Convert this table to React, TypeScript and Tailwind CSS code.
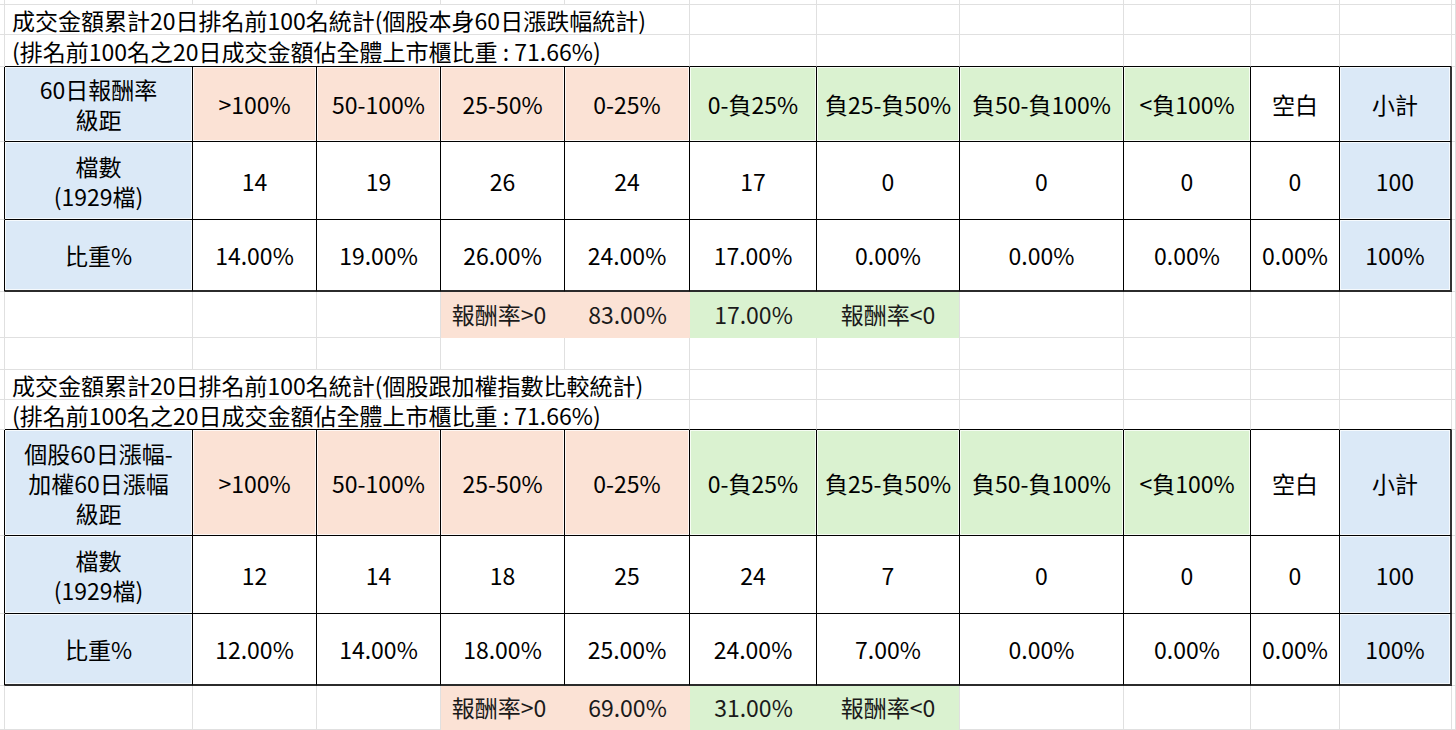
import React from "react";

type Fill = "blue" | "pink" | "green" | "white";

const GRID = "border-r border-b border-[#e0e0e0]";

const FILL: Record<Fill, string> = {
  blue: "bg-[#dbe9f7] shadow-[inset_0_0_0_1px_rgba(255,255,255,0.75)]",
  pink: "bg-[#fbe2d5] shadow-[inset_0_0_0_1px_rgba(255,255,255,0.75)]",
  green: "bg-[#daf2d0] shadow-[inset_0_0_0_1px_rgba(255,255,255,0.75)]",
  white: "bg-white",
};

const HEAD_FILLS: Fill[] = ["blue", "pink", "pink", "pink", "pink", "green", "green", "green", "green", "white", "blue"];
const BODY_FILLS: Fill[] = ["blue", "white", "white", "white", "white", "white", "white", "white", "white", "white", "blue"];

const RANGES = [">100%", "50-100%", "25-50%", "0-25%", "0-負25%", "負25-負50%", "負50-負100%", "<負100%", "空白", "小計"];

const TABLES = [
  {
    title: "成交金額累計20日排名前100名統計(個股本身60日漲跌幅統計)",
    sub: "(排名前100名之20日成交金額佔全體上市櫃比重 : 71.66%)",
    head: "60日報酬率\n級距",
    counts: ["14", "19", "26", "24", "17", "0", "0", "0", "0", "100"],
    pcts: ["14.00%", "19.00%", "26.00%", "24.00%", "17.00%", "0.00%", "0.00%", "0.00%", "0.00%", "100%"],
    up: "83.00%",
    down: "17.00%",
  },
  {
    title: "成交金額累計20日排名前100名統計(個股跟加權指數比較統計)",
    sub: "(排名前100名之20日成交金額佔全體上市櫃比重 : 71.66%)",
    head: "個股60日漲幅-\n加權60日漲幅\n級距",
    counts: ["12", "14", "18", "25", "24", "7", "0", "0", "0", "100"],
    pcts: ["12.00%", "14.00%", "18.00%", "25.00%", "24.00%", "7.00%", "0.00%", "0.00%", "0.00%", "100%"],
    up: "69.00%",
    down: "31.00%",
  },
];

function Cell({ children, className = "" }: { children?: React.ReactNode; className?: string }) {
  return (
    <div className={`flex items-center justify-center text-center whitespace-pre-line leading-[30px] ${className}`}>
      {children}
    </div>
  );
}

function BlankRow() {
  return (
    <>
      {Array.from({ length: 13 }).map((_, i) => (
        <Cell key={i} className={GRID} />
      ))}
    </>
  );
}

function TitleRow({ text, tableTop = false }: { text: string; tableTop?: boolean }) {
  const bottom = tableTop ? "border-r border-b border-[#e0e0e0] border-b-black" : GRID;
  return (
    <>
      <Cell className={GRID} />
      <Cell className={`col-span-5 !justify-start pl-[7px] whitespace-nowrap !leading-[24px] ${bottom}`}>
        {text}
      </Cell>
      {Array.from({ length: 6 }).map((_, i) => (
        <Cell key={i} className={bottom} />
      ))}
      <Cell className={GRID} />
    </>
  );
}

function TableRow({ cells, fills, last = false }: { cells: string[]; fills: Fill[]; last?: boolean }) {
  return (
    <>
      <Cell className="border-b border-r border-[#e0e0e0] border-r-black" />
      {cells.map((c, i) => (
        <Cell
          key={i}
          className={`border-r border-b border-black ${FILL[fills[i]]} ${last ? "border-b-2 border-b-[#2b2b2b]" : ""} ${
            i === 10 ? "border-r-2 border-r-[#333]" : ""
          }`}
        >
          {c}
        </Cell>
      ))}
      <Cell className={GRID} />
    </>
  );
}

function SummaryRow({ up, down }: { up: string; down: string }) {
  return (
    <>
      {Array.from({ length: 4 }).map((_, i) => (
        <Cell key={i} className={GRID} />
      ))}
      <Cell className="bg-[#fbe2d5] text-[#1a1a1a] pr-[8px] pb-[3px]">報酬率&gt;0</Cell>
      <Cell className="bg-[#fbe2d5] text-[#1a1a1a] pb-[3px]">{up}</Cell>
      <Cell className="bg-[#daf2d0] text-[#1a1a1a] pb-[3px]">{down}</Cell>
      <Cell className="bg-[#daf2d0] text-[#1a1a1a] pb-[3px] border-r border-[#e0e0e0]">報酬率&lt;0</Cell>
      {Array.from({ length: 5 }).map((_, i) => (
        <Cell key={i} className={GRID} />
      ))}
    </>
  );
}

export default function App() {
  const [a, b] = TABLES;
  return (
    <div className="w-[1456px] h-[730px] overflow-hidden bg-white text-black text-[23px] [font-family:'Noto_Sans_CJK_TC','Noto_Sans',sans-serif]">
      <div className="grid grid-cols-[5px_188px_124px_124px_124px_125px_127px_143px_164px_127px_89px_112px_1fr] grid-rows-[5px_30px_32px_75px_78px_72px_46px_32px_30px_30px_106px_78px_72px_44px]">
        <BlankRow />
        <TitleRow text={a.title} />
        <TitleRow text={a.sub} tableTop />
        <TableRow cells={[a.head, ...RANGES]} fills={HEAD_FILLS} />
        <TableRow cells={["檔數\n(1929檔)", ...a.counts]} fills={BODY_FILLS} />
        <TableRow cells={["比重%", ...a.pcts]} fills={BODY_FILLS} last />
        <SummaryRow up={a.up} down={a.down} />
        <BlankRow />
        <TitleRow text={b.title} />
        <TitleRow text={b.sub} tableTop />
        <TableRow cells={[b.head, ...RANGES]} fills={HEAD_FILLS} />
        <TableRow cells={["檔數\n(1929檔)", ...b.counts]} fills={BODY_FILLS} />
        <TableRow cells={["比重%", ...b.pcts]} fills={BODY_FILLS} last />
        <SummaryRow up={b.up} down={b.down} />
      </div>
    </div>
  );
}
